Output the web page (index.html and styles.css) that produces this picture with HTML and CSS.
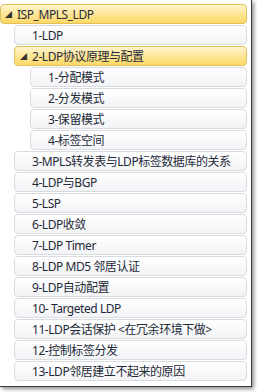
FILE: index.html
```html
<!DOCTYPE html>
<html lang="en">
<head>
    <meta charset="UTF-8">
    <title>ISP_MPLS_LDP</title>
    <link rel="stylesheet" href="styles.css">
</head>
<body>
    <div class="window">
        <div class="tree">
            <div class="node selected level-0"><span class="caret">◢</span>ISP_MPLS_LDP</div>
            <div class="node level-1">1-LDP</div>
            <div class="node selected level-1"><span class="caret">◢</span>2-LDP协议原理与配置</div>
            <div class="node level-2">1-分配模式</div>
            <div class="node level-2">2-分发模式</div>
            <div class="node level-2">3-保留模式</div>
            <div class="node level-2">4-标签空间</div>
            <div class="node level-1">3-MPLS转发表与LDP标签数据库的关系</div>
            <div class="node level-1">4-LDP与BGP</div>
            <div class="node level-1">5-LSP</div>
            <div class="node level-1">6-LDP收敛</div>
            <div class="node level-1">7-LDP Timer</div>
            <div class="node level-1">8-LDP MD5 邻居认证</div>
            <div class="node level-1">9-LDP自动配置</div>
            <div class="node level-1">10- Targeted LDP</div>
            <div class="node level-1">11-LDP会话保护 &lt;在冗余环境下做&gt;</div>
            <div class="node level-1">12-控制标签分发</div>
            <div class="node level-1">13-LDP邻居建立不起来的原因</div>
        </div>
    </div>
</body>
</html>
```

FILE: styles.css
```css
* {
    margin: 0;
    padding: 0;
    box-sizing: border-box;
}

body {
    font-family: "Noto Sans", "Noto Sans CJK SC", sans-serif;
    font-size: 12px;
    background: white;
    width: 258px;
    height: 392px;
    overflow: hidden;
}

.window {
    width: 252px;
    height: 387px;
    background: white;
    border-right: 1px solid #3a3a3a;
    border-bottom: 1px solid #3a3a3a;
    box-shadow: 2px 2px 4px rgba(0,0,0,0.45);
    padding: 4px 4px 0 0;
}

.tree {
    display: flex;
    flex-direction: column;
    gap: 1px;
}

.node {
    height: 20px;
    display: flex;
    align-items: center;
    border: 1px solid #d8dce1;
    border-radius: 4px;
    background: linear-gradient(#ffffff, #f2f3f5);
    color: #1e2a38;
    white-space: nowrap;
    letter-spacing: -0.45px;
}

.node.selected {
    background: linear-gradient(#fff4cc, #fdd865);
    border-color: #e0c05a;
}

.level-0 {
    padding-left: 16px;
}

.level-1 {
    margin-left: 14px;
    padding-left: 17px;
}

.level-2 {
    margin-left: 30px;
    padding-left: 17px;
}

.caret {
    font-size: 7px;
    color: #333;
    width: 12px;
    margin-left: -12px;
}
```
